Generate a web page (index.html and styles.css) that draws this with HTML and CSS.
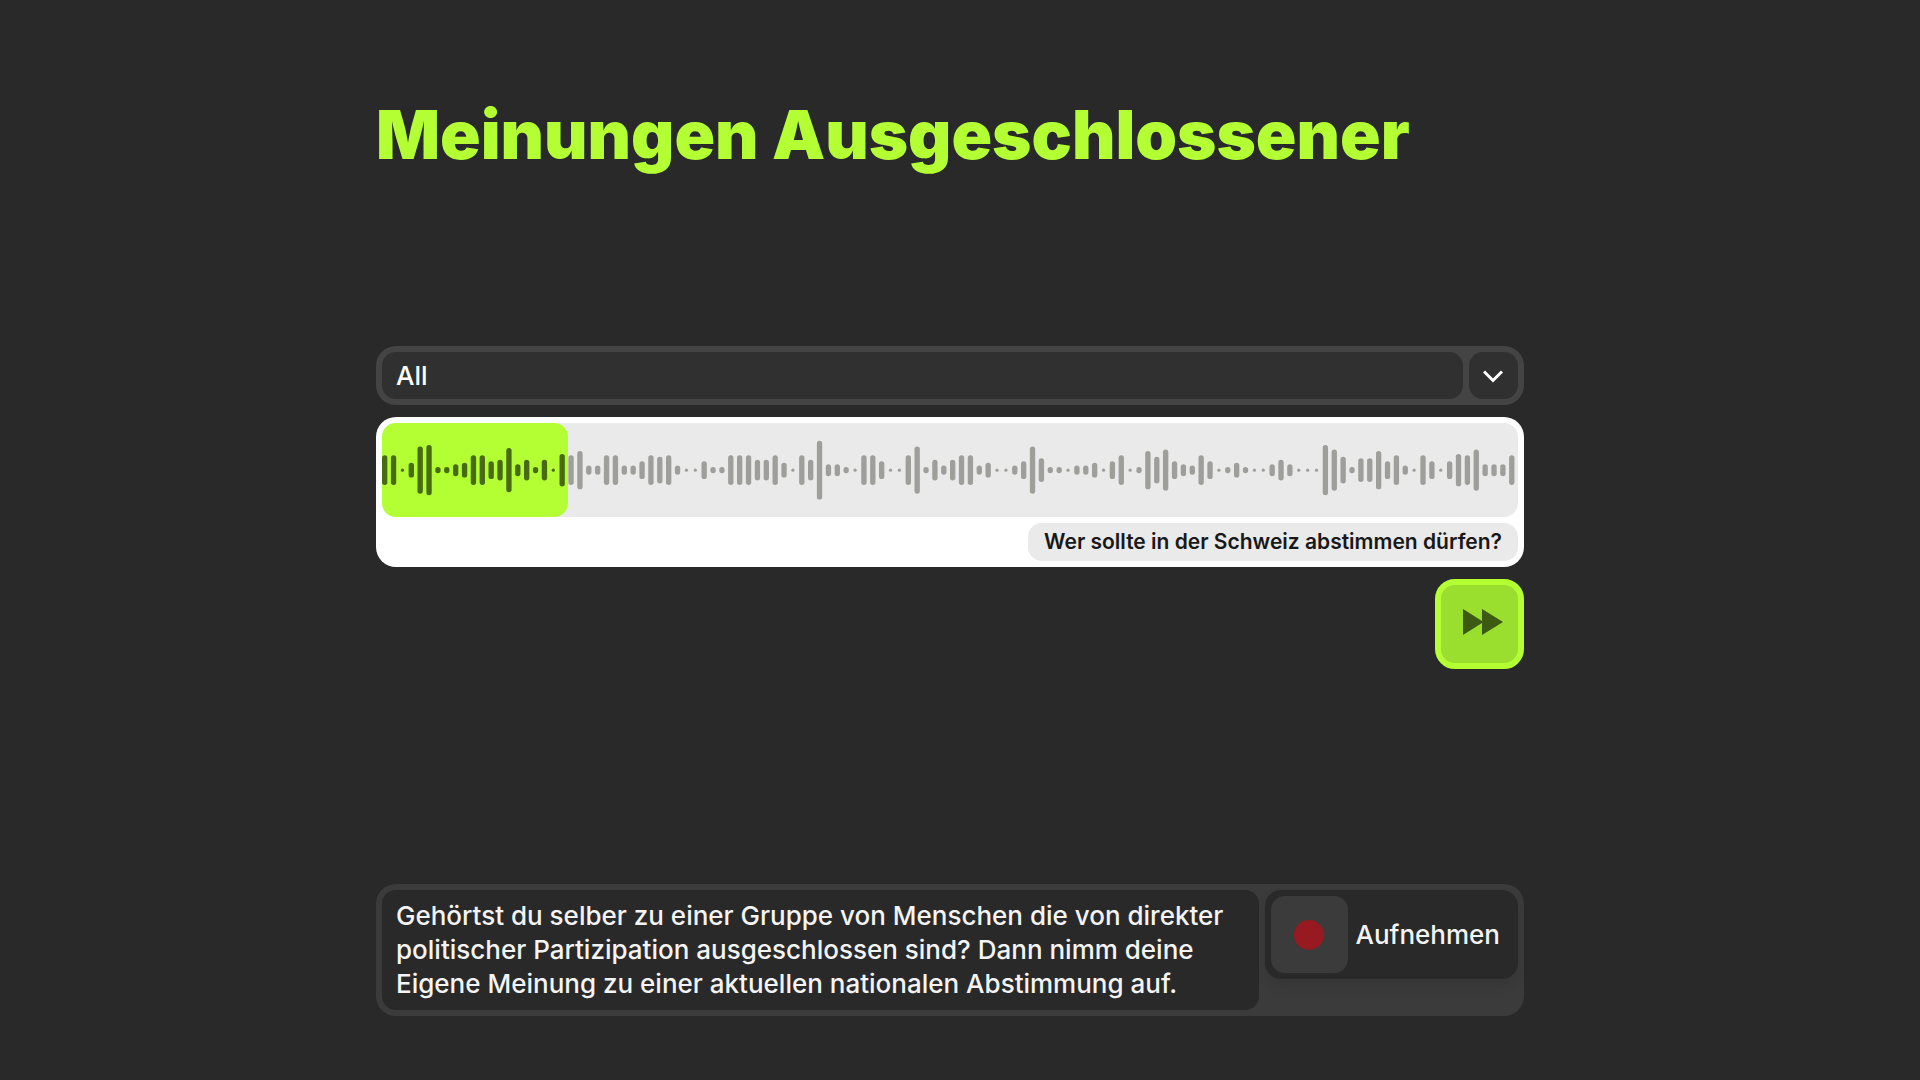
FILE: index.html
```html
<!doctype html>
<html lang="de">
<head>
<meta charset="utf-8">
<title>Meinungen Ausgeschlossener</title>
<link rel="stylesheet" href="styles.css">
</head>

<body>
<div class="page">
    <h1 class="title">Meinungen Ausgeschlossener</h1>
    <main class="player">
        <div class="filter">
            <select class="filter-select" aria-label="Gruppe">
                <option>All</option>
            </select>
            <span class="filter-arrow">
                <svg width="22" height="14" viewBox="0 0 22 14"><path d="M1 2.500L10 11.500L19 2.500" fill="none" stroke="#fff" stroke-width="3"/></svg>
            </span>
        </div>
        <div class="track">
            <div class="wave">
                <div class="progress"></div>
                <svg class="bars" id="bars" viewBox="0 0 640 52"></svg>
            </div>
            <p class="question">Wer sollte in der Schweiz abstimmen dürfen?</p>
        </div>
        <button class="next" type="button" aria-label="Weiter">
            <svg width="40" height="26" viewBox="0 0 40 26"><path d="M0 0L19 12V0L40 13L19 26V14L0 26Z" fill="#3c5a12"/></svg>
        </button>
    </main>
    <footer class="record">
        <p class="record-text">Gehörtst du selber zu einer Gruppe von Menschen die von direkter politischer Partizipation ausgeschlossen sind? Dann nimm deine Eigene Meinung zu einer aktuellen nationalen Abstimmung auf.</p>
        <button class="record-btn" type="button">
            <span class="record-icon"><span class="dot"></span></span>
            Aufnehmen
        </button>
    </footer>
</div>
<script src="wave.js"></script>
</body>
</html>
```
FILE: styles.css
```css
*{box-sizing:border-box;}
body,h1,p{margin:0;padding:0;}
body{background:#292929;color:#f4f4f4;padding-right:20px;font:500 26px/34px Inter,"Liberation Sans",sans-serif;}
button,select{font:inherit;color:inherit;border:0;margin:0;cursor:pointer;}
.page{display:flex;flex-direction:column;min-height:100vh;max-width:1148px;margin:0 auto;padding:93px 0 64px;}
.title{color:#b3ff33;font-size:67px;line-height:84px;font-weight:900;}
.player{display:flex;flex-direction:column;gap:12px;margin-top:169px;}

.filter{display:flex;gap:6px;padding:6px;border-radius:20px;background:#444;}
.filter-select{flex:1;height:47px;padding:0 14px;border-radius:14px;background:#303030;color:#fff;appearance:none;}
.filter-arrow{display:flex;align-items:center;justify-content:center;width:49px;border-radius:14px;background:#303030;}

.track{display:flex;flex-direction:column;gap:6px;padding:6px;border-radius:20px;background:#fff;}
.wave{display:grid;align-items:center;height:94px;border-radius:14px;background:#eaeaea;}
.progress,.bars{grid-area:1/1;}
.progress{width:186px;height:100%;border-radius:14px;background:#b3ff33;}
.bars{width:100%;fill:#9e9e9a;}
.bars .played{fill:#486a12;}
.question{align-self:flex-end;padding:0 16px;border-radius:14px;background:#eaeaea;color:#181818;font-size:21px;line-height:38px;font-weight:600;}

.next{display:flex;align-self:flex-end;align-items:center;justify-content:center;width:89px;height:90px;padding:0 0 4px 6px;border:6px solid #b3ff33;border-radius:20px;background:#9ade2e;}

.record{display:flex;align-items:flex-start;gap:6px;margin-top:auto;padding:6px;border-radius:20px;background:#3b3b3b;}
.record-text{flex:1;padding:9px 14px;border-radius:14px;background:#292929;}
.record-btn{display:flex;align-items:center;gap:8px;padding:6px 18px 6px 6px;border-radius:16px;background:#292929;box-shadow:0 6px 12px rgba(0,0,0,.1);}
.record-icon{display:flex;align-items:center;justify-content:center;width:77px;height:77px;border-radius:14px;background:#3b3b3b;}
.dot{width:30px;height:30px;border-radius:50%;background:#961a20;}
```
FILE: wave.js
```js
var oBars = document.getElementById("bars");
var aLevel = [
	9,9,0,4,15,16,1,1,3,4,9,9,5,6,14,3,6,1,6,0,10,9,12,2,2,9,9,2,2,5,9,8,
	9,2,0,0,5,1,1,9,9,9,6,6,9,4,0,9,6,19,3,3,1,0,9,9,5,0,0,9,15,1,6,2,
	6,9,9,2,4,0,0,2,5,15,7,1,1,0,2,2,4,0,5,9,0,1,12,8,13,5,3,2,9,5,0,1,
	4,1,0,0,3,6,3,0,0,0,16,13,8,1,7,7,12,5,9,2,0,9,5,0,5,10,9,13,3,3,3,9
];
var played = 21;
for(var i = 0; i < aLevel.length; i++){
	var bar = document.createElementNS("http://www.w3.org/2000/svg", "rect");
	var h = 1.8 + aLevel[i] * 1.65;
	var w = Math.min(3, h);
	bar.setAttribute("x", i * 5 + (3 - w) / 2);
	bar.setAttribute("y", 26 - h / 2);
	bar.setAttribute("width", w);
	bar.setAttribute("height", h);
	bar.setAttribute("rx", w / 2);
	if(i < played){
		bar.setAttribute("class", "played");
	}
	oBars.appendChild(bar);
}
```
